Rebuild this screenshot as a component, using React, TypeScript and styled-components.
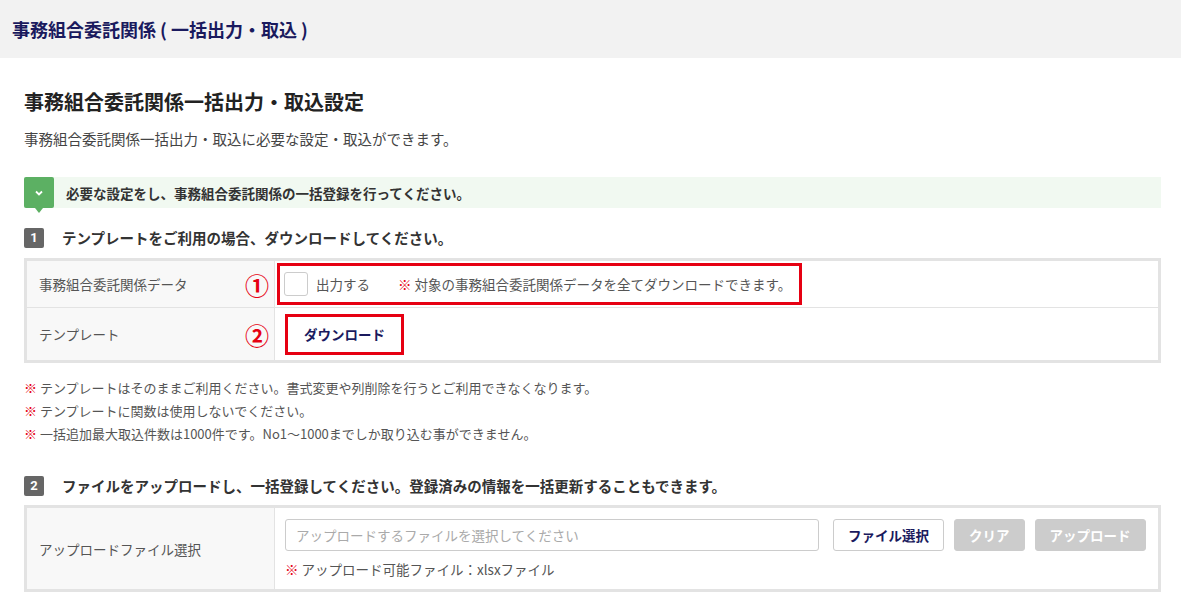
import React from "react";
import styled, { createGlobalStyle } from "styled-components";

const G = createGlobalStyle`
  body { margin:0; background:#fff; font-family: "Noto Sans CJK JP", "Noto Sans", sans-serif; color:#333; }
`;
const Header = styled.div`
  height:58px; background:#f2f2f2; display:flex; align-items:center; padding-left:12px;
  font-size:18px; font-weight:700; color:#1a1a5e;
`;
const Main = styled.div`padding:29px 20px 0 24px;`;
const Title = styled.h1`margin:0; font-size:20px; font-weight:700; color:#222; line-height:30px;`;
const Sub = styled.p`margin:11px 0 0; font-size:14.5px; color:#444; line-height:22px;`;
const Info = styled.div`
  margin-top:27px; height:31px; background:#f1f9f1; display:flex; align-items:center; gap:12px;
  font-size:13.5px; font-weight:700; color:#333;
`;
const InfoIcon = styled.div`
  position:relative; width:30px; height:31px; background:#5cb063; color:#fff; display:flex;
  align-items:center; justify-content:center; border-radius:2px;
  &::after{content:""; position:absolute; left:11px; bottom:-5px; border:4px solid transparent;
    border-top:5px solid #5cb063; border-bottom:0;}
`;
const StepHead = styled.div<{ $mt: number }>`
  margin-top:${p => p.$mt}px; display:flex; align-items:center; gap:18px; font-size:14.5px; font-weight:700; color:#333;
`;
const Num = styled.span`
  width:20px; height:20px; background:#666; color:#fff; border-radius:2px; display:flex;
  align-items:center; justify-content:center; font-size:13px; font-weight:700; font-family:"Roboto",sans-serif;
`;
const Table = styled.div<{ $mt: number }>`
  margin-top:${p => p.$mt}px; border:3px solid #e3e3e3; display:grid; grid-template-columns:248px 1fr;
`;
const Label = styled.div<{ $h: number }>`
  height:${p => p.$h}px; background:#f8f8f8; border-right:1px solid #e3e3e3; border-bottom:1px solid #e3e3e3;
  display:flex; align-items:center; padding-left:12px; font-size:13.5px; color:#555;
  &:nth-last-child(2){border-bottom:0;}
`;
const Value = styled.div<{ $h: number }>`
  height:${p => p.$h}px; border-bottom:1px solid #e3e3e3; display:flex; align-items:center; padding-left:10px;
  position:relative; font-size:13.5px; color:#555;
  &:last-child{border-bottom:0;}
`;
const Circled = styled.span`
  position:absolute; left:-30px; top:50%; transform:translateY(-50%); color:#e60012; font-size:24px; font-weight:700;
`;
const RedBox = styled.div`
  border:3px solid #e60012; display:flex; align-items:center; gap:8px; padding:2px 8px 2px 4px; height:32px;
  margin-left:-8px;
`;
const Check = styled.span`width:22px; height:22px; border:1px solid #ccc; border-radius:3px; background:#fff;`;
const Red = styled.span`color:#e60012;`;
const Btn = styled.button<{ $dis?: boolean }>`
  height:32px; padding:0 14px; border-radius:3px; font-family:inherit; font-size:13.5px; font-weight:700;
  border:1px solid #ccc; background:${p => (p.$dis ? "#ccc" : "#fff")};
  color:${p => (p.$dis ? "#fff" : "#1a1a5e")};
`;
const DLBox = styled.div`border:3px solid #e60012; padding:0 2px; height:35px; display:flex; align-items:center;`;
const Notes = styled.div`margin-top:13px; font-size:13px; color:#555; line-height:23px;`;
const UploadCol = styled.div`display:flex; flex-direction:column; gap:8px;`;
const UploadRow = styled.div`display:flex; gap:10px; align-items:center;`;
const Input = styled.div`
  width:522px; height:30px; border:1px solid #ccc; border-radius:3px; padding-left:10px; display:flex; align-items:center;
  color:#aaa; font-size:13.5px; margin-right:4px;
`;

export default function App() {
  return (
    <>
      <G />
      <Header>事務組合委託関係 ( 一括出力・取込 )</Header>
      <Main>
        <Title>事務組合委託関係一括出力・取込設定</Title>
        <Sub>事務組合委託関係一括出力・取込に必要な設定・取込ができます。</Sub>
        <Info>
          <InfoIcon>
            <svg width="10" height="8" viewBox="0 0 10 8"><path d="M2 2.5l3 3 3-3" stroke="#fff" strokeWidth="1.8" fill="none" /></svg>
          </InfoIcon>
          必要な設定をし、事務組合委託関係の一括登録を行ってください。
        </Info>
        <StepHead $mt={19}><Num>1</Num>テンプレートをご利用の場合、ダウンロードしてください。</StepHead>
        <Table $mt={10}>
          <Label $h={46}>事務組合委託関係データ</Label>
          <Value $h={46}>
            <Circled>①</Circled>
            <RedBox><Check />出力する<span style={{ width: 12 }} /><span><Red>※</Red> 対象の事務組合委託関係データを全てダウンロードできます。</span></RedBox>
          </Value>
          <Label $h={52}>テンプレート</Label>
          <Value $h={52}>
            <Circled>②</Circled>
            <DLBox><Btn style={{ border: 0 }}>ダウンロード</Btn></DLBox>
          </Value>
        </Table>
        <Notes>
          <div><Red>※</Red> テンプレートはそのままご利用ください。書式変更や列削除を行うとご利用できなくなります。</div>
          <div><Red>※</Red> テンプレートに関数は使用しないでください。</div>
          <div><Red>※</Red> 一括追加最大取込件数は1000件です。No1～1000までしか取り込む事ができません。</div>
        </Notes>
        <StepHead $mt={30}><Num>2</Num>ファイルをアップロードし、一括登録してください。登録済みの情報を一括更新することもできます。</StepHead>
        <Table $mt={9}>
          <Label $h={81}>アップロードファイル選択</Label>
          <Value $h={81}>
            <UploadCol>
              <UploadRow>
                <Input>アップロードするファイルを選択してください</Input>
                <Btn>ファイル選択</Btn>
                <Btn $dis>クリア</Btn>
                <Btn $dis>アップロード</Btn>
              </UploadRow>
              <div><Red>※</Red> アップロード可能ファイル：xlsxファイル</div>
            </UploadCol>
          </Value>
        </Table>
      </Main>
    </>
  );
}
